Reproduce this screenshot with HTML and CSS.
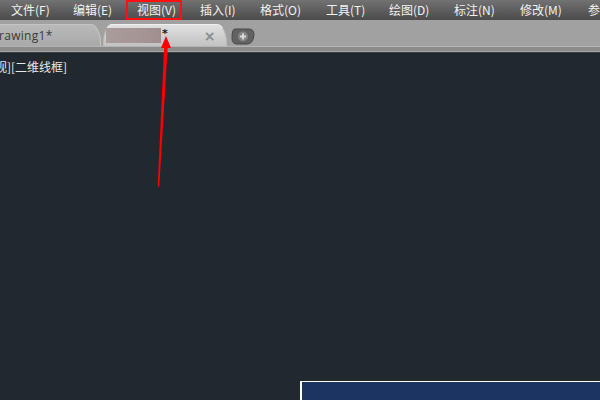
FILE: index.html
```html
<!DOCTYPE html>
<html>
<head>
<meta charset="utf-8">
<link rel="stylesheet" href="styles.css">
</head>
<body>
<div class="app">
  <nav class="menubar">
    <span class="mi m1">文件(F)</span>
    <span class="mi m2">编辑(E)</span>
    <span class="mi m3 hl">视图(V)</span>
    <span class="mi m4">插入(I)</span>
    <span class="mi m5">格式(O)</span>
    <span class="mi m6">工具(T)</span>
    <span class="mi m7">绘图(D)</span>
    <span class="mi m8">标注(N)</span>
    <span class="mi m9">修改(M)</span>
    <span class="mi m10">参</span>
  </nav>
  <div class="tabbar">
    <div class="tab tab1"><span class="tabtext">rawing1*</span></div>
    <div class="tab tab2">
      <span class="blur"></span><span class="star">*</span>
      <span class="close">×</span>
    </div>
    <div class="newtab">
      <svg width="24" height="17" viewBox="0 0 24 17">
        <path d="M4 1 H18 Q23 1 23 7 Q22 16 16 16 H6 Q1 16 1 10 Q1 1 4 1 Z" fill="#626262" stroke="#484848" stroke-width="1"/>
        <circle cx="12" cy="8.5" r="5" fill="#858585"/>
        <path d="M12 5.5 V11.5 M9 8.5 H15" stroke="#d8d8d8" stroke-width="2"/>
      </svg>
    </div>
  </div>
  <div class="sep"></div>
  <main class="canvas">
    <div class="viewlabel">视][二维线框]</div>
    <div class="bottom">
      <div class="panel"></div>
    </div>
  </main>
  <svg class="arrow" width="600" height="400" viewBox="0 0 600 400">
    <path d="M158.5 186 L165 46 L167 46 Z" fill="#ff0000" stroke="#ff0000" stroke-width="1.6" stroke-linejoin="round"/>
    <path d="M166 36 L161 48 L171 48 Z" fill="#ff0000"/>
  </svg>
</div>
</body>
</html>
```

FILE: styles.css
```css
* { box-sizing: border-box; }
html, body { margin: 0; padding: 0; }
body {
  width: 600px;
  height: 400px;
  overflow: hidden;
  font-family: "Noto Sans CJK SC", "Noto Sans", sans-serif;
  background: #222830;
}
.app {
  position: relative;
  width: 600px;
  height: 400px;
  display: flex;
  flex-direction: column;
}
.menubar {
  height: 20px;
  display: flex;
  align-items: center;
  background: linear-gradient(#727272, #5a5a5a 60%, #4c4c4c);
  white-space: nowrap;
  overflow: hidden;
  padding-left: 11px;
}
.mi {
  color: #f2f2f2;
  font-size: 12px;
  line-height: 20px;
  flex: none;
}
.m1 { width: 62px; }
.m2 { width: 53px; }
.m3 {
  width: 56px;
  padding-left: 9px;
  border: 2px solid #ff1010;
  line-height: 16px;
  height: 20px;
}
.m4 { width: 60px; margin-left: 18px; }
.m5 { width: 66px; }
.m6 { width: 63px; }
.m7 { width: 65px; }
.m8 { width: 66px; }
.m9 { width: 68px; }
.tabbar {
  height: 26px;
  background: #a1a1a1;
  display: flex;
  align-items: flex-end;
  position: relative;
}
.tab {
  height: 22px;
  position: relative;
  flex: none;
}
.tab1 {
  width: 101px;
  background: linear-gradient(#b9b9b9, #a9a9a9);
  border-top: 1px solid #c4c4c4;
  border-right: 1px solid #c6c6c6;
  border-top-right-radius: 10px 20px;
  display: flex;
  align-items: center;
}
.tabtext {
  font-family: "Open Sans", "Noto Sans", sans-serif;
  font-size: 12px;
  color: #3a3a3a;
  margin-left: -1px;
  letter-spacing: 0.3px;
}
.tab2 {
  width: 124px;
  margin-left: 2px;
  background: linear-gradient(#e0e0e0, #cecece 60%, #c2c2c2);
  border-top: 1px solid #efefef;
  border-left: 1px solid #bcbcbc;
  border-right: 1px solid #bcbcbc;
  border-radius: 9px 10px 0 0 / 20px 20px 0 0;
  display: flex;
  align-items: center;
  padding-left: 2px;
}
.blur {
  width: 55px;
  height: 15px;
  background: linear-gradient(90deg, #a89c9c, #a69494 70%, #9e8e90);
  display: block;
}
.star {
  font-family: "DejaVu Sans", sans-serif;
  font-size: 11px;
  font-weight: bold;
  line-height: 11px;
  color: #1a1a1a;
  margin-top: -5px;
  margin-left: 1px;
}
.close {
  font-family: "DejaVu Sans", sans-serif;
  font-size: 14px;
  font-weight: bold;
  color: #8c8c8c;
  margin-left: 36px;
}
.newtab {
  margin-left: 4px;
  margin-bottom: 3px;
  height: 17px;
  flex: none;
}
.sep {
  height: 7px;
  background: linear-gradient(#b4b4b4 0, #b4b4b4 1px, #8b8b8b 1px, #8b8b8b 5px, #a6a6a6 5px, #a6a6a6 6px, #3a3f46 6px);
}
.canvas {
  flex: 1;
  background: #222830;
  display: flex;
  flex-direction: column;
  justify-content: space-between;
}
.viewlabel {
  color: #e8e8e8;
  font-size: 12px;
  line-height: 16px;
  margin-top: 6px;
  margin-left: -5px;
  white-space: nowrap;
}
.bottom {
  display: flex;
  justify-content: flex-end;
}
.panel {
  width: 300px;
  height: 19px;
  background: #1b3461;
  border-top: 1px solid #ffffff;
  border-left: 2px solid #ffffff;
}
.arrow {
  position: absolute;
  left: 0;
  top: 0;
  pointer-events: none;
}
```
